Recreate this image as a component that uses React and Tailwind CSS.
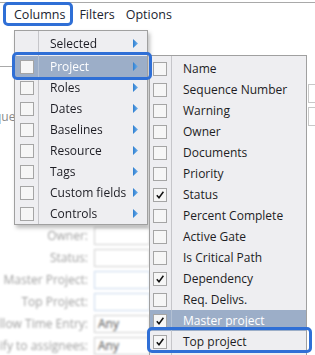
import React from "react";

const FONT = { fontFamily: '"Open Sans", "Noto Sans", "Liberation Sans", sans-serif' };

function Check({ checked }) {
  return (
    <div className="w-[14px] h-[14px] border border-[#a5a5a5] bg-[#f6f6f6] flex items-center justify-center shrink-0">
      {checked && (
        <svg width="10" height="10" viewBox="0 0 10 10">
          <path d="M1.8 5.2 L4 7.8 L8.4 1.8" fill="none" stroke="#111" strokeWidth="1.5" />
        </svg>
      )}
    </div>
  );
}

function Arrow() {
  return (
    <svg width="5" height="9" viewBox="0 0 5 9" className="shrink-0">
      <defs>
        <linearGradient id="ag" x1="0" y1="0" x2="1" y2="0">
          <stop offset="0" stopColor="#2f7fd0" />
          <stop offset="1" stopColor="#6fb0ec" />
        </linearGradient>
      </defs>
      <polygon points="0,0 5,4.5 0,9" fill="url(#ag)" />
    </svg>
  );
}

const mainItems = [
  { label: "Selected", box: false },
  { label: "Project", box: true, hl: true },
  { label: "Roles", box: true },
  { label: "Dates", box: true },
  { label: "Baselines", box: true },
  { label: "Resource", box: true },
  { label: "Tags", box: true },
  { label: "Custom fields", box: true },
  { label: "Controls", box: true },
];

const subItems = [
  { label: "Name" },
  { label: "Sequence Number" },
  { label: "Warning" },
  { label: "Owner" },
  { label: "Documents" },
  { label: "Priority" },
  { label: "Status", checked: true },
  { label: "Percent Complete" },
  { label: "Active Gate" },
  { label: "Is Critical Path" },
  { label: "Dependency", checked: true },
  { label: "Req. Delivs." },
  { label: "Master project", checked: true, hl: true },
  { label: "Top project", checked: true },
];

const formRows = [
  { label: "Owner:", kind: "input" },
  { label: "Status:", kind: "input" },
  { label: "Master Project:", kind: "blue" },
  { label: "Top Project:", kind: "blue" },
  { label: "Allow Time Entry:", kind: "select" },
  { label: "Notify to assignees:", kind: "select" },
];

export default function App() {
  return (
    <div className="relative w-[315px] h-[355px] overflow-hidden bg-white text-[12px]" style={FONT}>
      {/* Menu bar */}
      <div className="mt-[2px] border-t border-[#a9a9a9] h-[25px] flex items-center text-[12.5px] text-[#1b2430]">
        <span className="ml-[14px]">Columns</span>
        <span className="ml-[14px]">Filters</span>
        <span className="ml-[11px]">Options</span>
      </div>

      {/* Background page content */}
      <div className="flex flex-col">
        <div className="mt-[39px] w-[16px] border-t border-[#a9a9a9]" />
        <div className="mt-[17px] h-[19px] flex justify-end">
          <div className="w-[30px] -mr-[23px] border border-[#c8c8c8] bg-white" />
        </div>
        <div className="mt-[4px] h-[19px] flex items-center justify-between">
          <span className="-ml-[6px] text-[#8a8a8a] text-[12px]">que</span>
          <div className="w-[30px] h-[19px] -mr-[23px] border border-[#c8c8c8] bg-white" />
        </div>
        <div className="mt-[99px] flex flex-col blur-[1px]">
          {formRows.map((r) => (
            <div key={r.label} className="h-[22px] flex items-center">
              <div className="w-[88px] flex justify-end overflow-hidden">
                <span className="whitespace-nowrap text-[#a0a0a0] text-[12px]">{r.label}</span>
              </div>
              <div
                className={
                  "ml-[6px] w-[56px] h-[18px] border bg-white flex items-center pl-[3px] text-[#555] " +
                  (r.kind === "blue" ? "border-[#c9d8ec]" : "border-[#d0d0d0]")
                }
              >
                {r.kind === "select" ? "Any" : ""}
              </div>
            </div>
          ))}
        </div>
      </div>

      {/* Main dropdown menu */}
      <div className="absolute left-[14px] top-[30px] w-[134px] border border-[#a0a0a0] bg-[#eeeef1] shadow-[2px_3px_4px_rgba(0,0,0,0.25)] text-[#1d1d24]">
        {mainItems.map((it) => (
          <div
            key={it.label}
            className={
              "flex items-stretch " +
              (it.label === "Selected" ? "h-[25px] " : "h-[21px] ") +
              (it.hl ? "bg-[#9caec8] text-white" : "")
            }
          >
            <div
              className={
                "w-[24px] shrink-0 flex items-center justify-center border-r " +
                (it.hl ? "border-[#b3c1d4]" : "border-[#c6c6ca]")
              }
            >
              {it.box && <Check />}
            </div>
            <div className="flex-1 flex items-center justify-between pl-[11px] pr-[9px]">
              <span>{it.label}</span>
              <Arrow />
            </div>
          </div>
        ))}
      </div>

      {/* Submenu */}
      <div className="absolute left-[149px] top-[55px] w-[158px] h-[310px] border border-[#a0a0a0] bg-[#eeeef1] text-[#1d1d24]">
        <div className="h-[2px] flex">
          <div className="w-[22px] border-r border-[#c6c6ca]" />
        </div>
        {subItems.map((it) => (
          <div
            key={it.label}
            className={"h-[21px] flex items-stretch " + (it.hl ? "bg-[#9caec8] text-white" : "")}
          >
            <div
              className={
                "w-[22px] shrink-0 flex items-center justify-end pr-[4px] border-r " +
                (it.hl ? "border-[#b3c1d4]" : "border-[#c6c6ca]")
              }
            >
              <Check checked={it.checked} />
            </div>
            <div className="flex-1 flex items-center pl-[11px]">
              <span className="whitespace-nowrap">{it.label}</span>
            </div>
          </div>
        ))}
        <div className="flex h-[20px]">
          <div className="w-[22px] border-r border-[#c6c6ca]" />
        </div>
      </div>

      {/* Highlight outlines */}
      <div className="absolute left-[3px] top-[2px] w-[70px] h-[24px] border-[3px] border-[#2f6fd6] rounded-[5px]" />
      <div className="absolute left-[12px] top-[52px] w-[140px] h-[28px] border-[3px] border-[#2f6fd6] rounded-[5px]" />
      <div className="absolute left-[147px] top-[327px] w-[165px] h-[26px] border-[3px] border-[#2f6fd6] rounded-[5px]" />
    </div>
  );
}
